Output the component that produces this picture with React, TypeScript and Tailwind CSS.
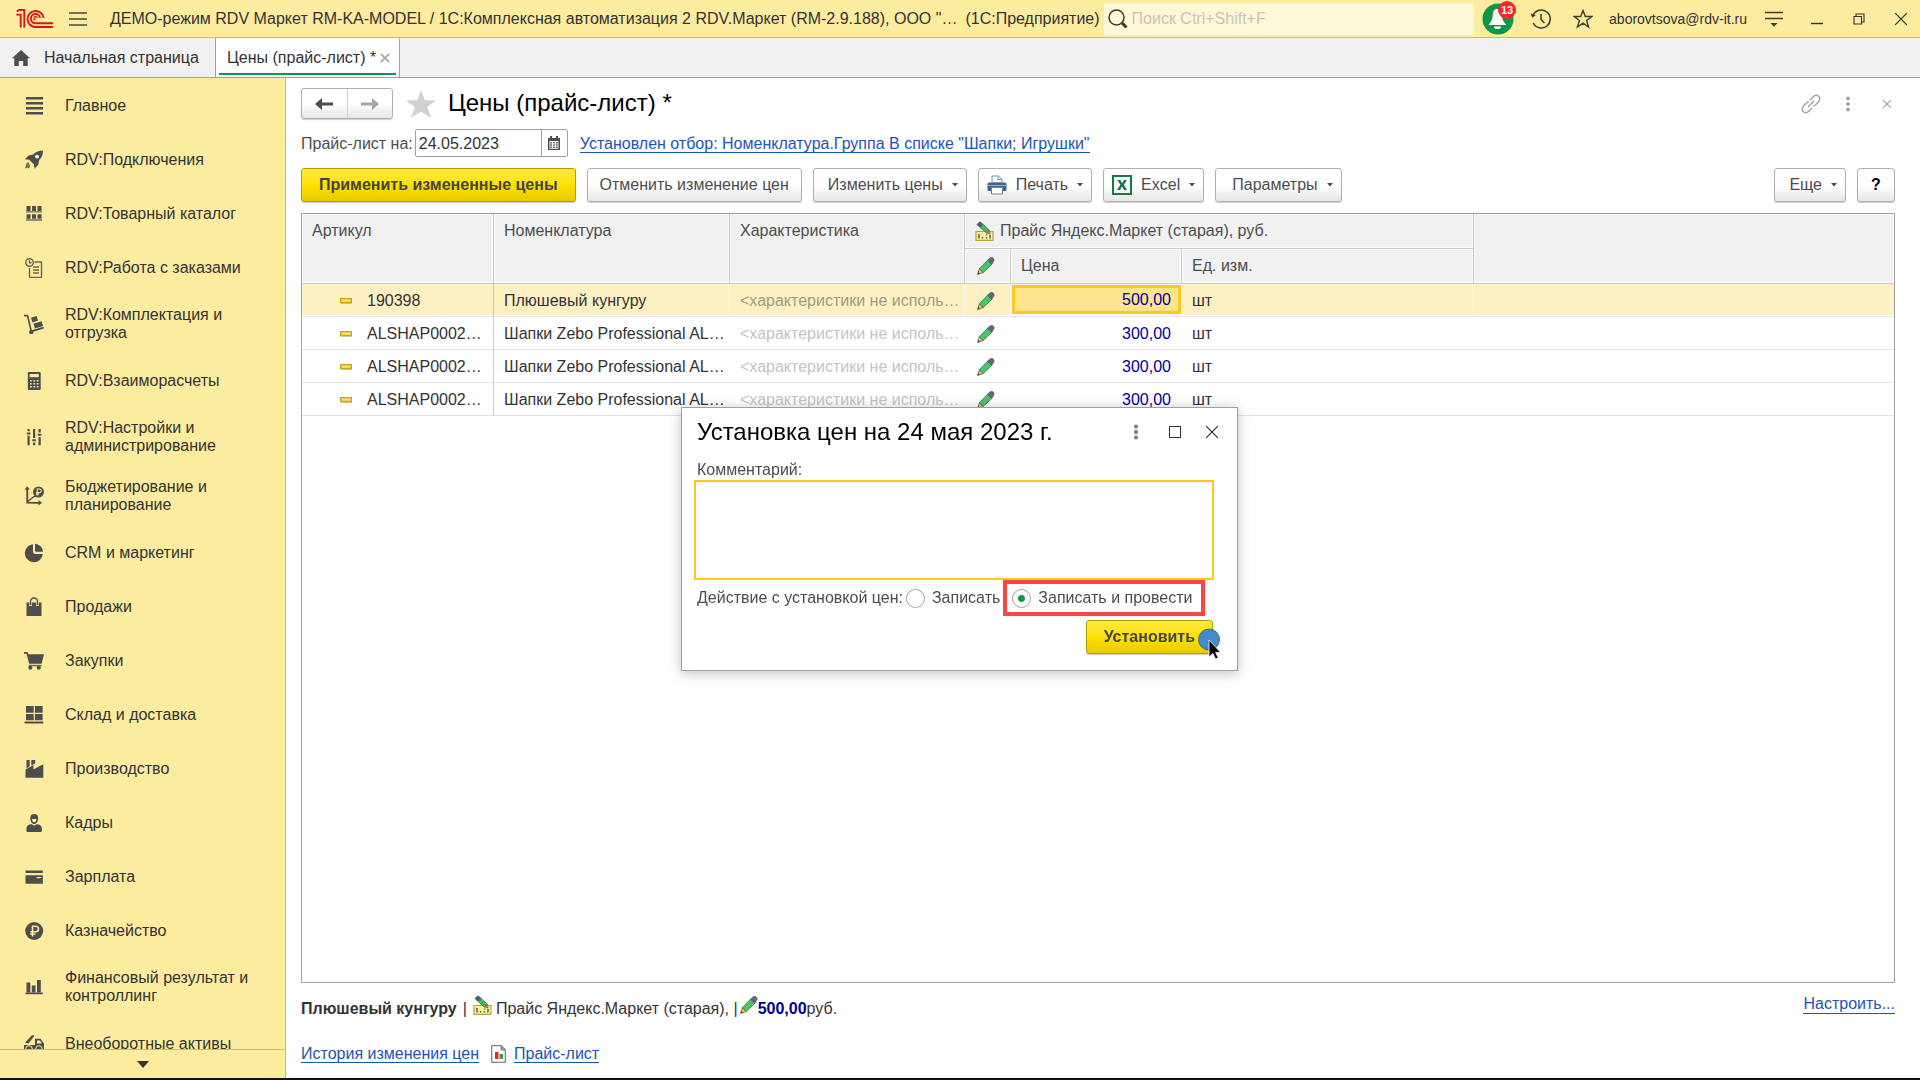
import { useState } from 'react'
import type { ReactNode } from 'react'
import clsx from 'clsx'

const INK = '#4d4d4d'

/* ---------- Section icons (20x20) ---------- */

function Svg({ children, size = 20 }: { children: ReactNode; size?: number }) {
  return (
    <svg width={size} height={size} viewBox={`0 0 ${size} ${size}`} className="shrink-0" fill={INK} aria-hidden="true">
      {children}
    </svg>
  )
}

const ICONS: Record<string, ReactNode> = {
  lines: <path d="M2 1h17v2.4H2zM2 6h17v2.4H2zM2 11h17v2.4H2zM2 16h17v2.4H2z" />,
  rocket: (
    <>
      <path d="M19 0.5c-4 .3-7.600 1.200-9.800 3.900L4.500 5.500 .8 9.200l4.400.6 4.800 4.800.5 4.200 3.800-4.100.9-4.600C18 7.600 19 4.500 19 .5z" />
      <circle cx="13" cy="6.600" r="1.900" fill="#fff" />
      <path d="M4.200 12l-1.700 1.200L1 18.800l2.600-1.400.4 1.400 2-1.800-.3-2.300z" opacity=".8" />
    </>
  ),
  shelves: (
    <>
      <path d="M2.500 2h4v5h-4zM8 2h4v5H8zM13.500 2h4v5h-4zM2.500 10.200h4v4.500h-4zM8 10.200h4v4.500H8zM13.500 10.200h4v4.500h-4z" />
      <path d="M2 7.200h16v1.200H2zM2 15.200h16v1.600H2z" opacity=".8" />
    </>
  ),
  orders: (
    <g fill="none" stroke="#6b6650" strokeWidth="1.400">
      <circle cx="5.500" cy="4.500" r="3.800" />
      <path d="M5.500 2.300v2.400h2" />
      <path d="M10.500 4h7v14.500a1 1 0 0 1-1 1h-10a1 1 0 0 1-1-1V10" />
      <path d="M9 9h6M9 12h6M9 15h6" />
    </g>
  ),
  trolley: (
    <>
      <path d="M0 .8h4.200l3.600 15.400 11.700-3.400.5 1.600-13.300 4L3 2.500H0z" />
      <circle cx="7.300" cy="18" r="2.200" />
      <path d="M7 3.800l5.500-1.800 1.500 4.600-5.500 1.800zM9.500 9.700l8-2.400 1.600 4.600-8.100 2.500z" />
    </>
  ),
  calc: (
    <>
      <path d="M5 1h10.500a1.200 1.200 0 0 1 1.200 1.200v15.600a1.200 1.200 0 0 1-1.200 1.200H5a1.200 1.200 0 0 1-1.200-1.200V2.200A1.200 1.200 0 0 1 5 1z" />
      <path d="M5.600 3h9.200v3.200H5.600zM6 9h1.700v1.400H6zM9.400 9h1.700v1.400H9.400zM12.800 9h1.700v1.400h-1.700zM6 12h1.700v1.400H6zM9.400 12h1.700v1.400H9.400zM12.800 12h1.700v1.400h-1.700zM6 15h1.700v1.400H6zM9.400 15h1.700v1.400H9.400zM12.800 15h1.700v1.400h-1.700z" fill="#fbeca0" />
    </>
  ),
  sliders: (
    <path d="M3.500 2h2.200v2.200H3.500zM2.800 5.500h3.600v2H2.800zM3.500 8.800h2.200v9.400H3.500zM9 2h2.200v9H9zM8.300 12.200h3.600v2H8.300zM9 15.600h2.200v2.600H9zM14.500 2h2.200v3.500h-2.200zM13.800 6.800h3.600v2h-3.600zM14.500 10.200h2.200v8h-2.200z" />
  ),
  budget: (
    <>
      <path d="M2.300 17.500V3.500H.5L3.200.3l2.700 3.200H4.200v12.600h10.300v-1.900l3.600 2.600-3.600 2.600v-1.700z" />
      <path d="M4 15.500l4.800-4.200 2.800-1.400" fill="none" stroke={INK} strokeWidth="1.300" />
      <circle cx="14.500" cy="6" r="5.500" />
      <path d="M13.200 9.600V3h2.300a1.800 1.800 0 0 1 0 3.600h-3.600M11.900 8.200h3.300" fill="none" stroke="#fbeca0" strokeWidth="1.100" />
    </>
  ),
  pie: (
    <>
      <path d="M9 1.200A9 9 0 1 0 18.800 11H11.500A2.500 2.500 0 0 1 9 8.500z" />
      <path d="M11 .8A8.500 8.500 0 0 1 19 8.800H12.200A1.200 1.200 0 0 1 11 7.600z" />
    </>
  ),
  bag: (
    <>
      <path d="M2.500 5.500h15V19h-15z" />
      <path d="M6.500 9V4.500a3.500 3.500 0 0 1 7 0V9" fill="none" stroke="#fbeca0" strokeWidth="2.600" />
      <path d="M6.500 8V4.500a3.500 3.500 0 0 1 7 0V8" fill="none" stroke={INK} strokeWidth="1.400" />
    </>
  ),
  cart: (
    <>
      <path d="M0 1h3.600l.8 2.200H20l-2.400 9.600H5.200L2.500 2.800H0z" />
      <path d="M4.600 13.800h13v1.600h-13z" opacity=".8" />
      <circle cx="6.300" cy="16.800" r="2" />
      <circle cx="14.800" cy="16.800" r="2" />
    </>
  ),
  store: <path d="M2 1h7.700v6.700H2zM10.900 1h7.700v6.700h-7.700zM2 8.900h7.700v6.300H2zM10.900 8.900h7.700v6.300h-7.700zM.5 16.400h18.700v2H.5z" />,
  factory: (
    <path d="M2.500 1h3.200v6.200L2.500 9.400zM7.300 1h3.900v3.600L7.300 6.600zM1.500 18.800v-8.200l8-4.600v4.200l9.800-5v13.600z" />
  ),
  person: (
    <>
      <path d="M6.300 5.200C6.300 2.200 7.800 1 10.200 1s4 1.200 4 4.200c0 3-1.600 5.800-4 5.800s-3.900-2.800-3.900-5.800z" />
      <path d="M8 6h4.400c0 1.900-.8 3.300-2.200 3.300S8 7.900 8 6z" fill="#fbeca0" />
      <path d="M2.500 16c0-3.500 2-4.600 5.300-4.800l2.400 1.600 2.400-1.600c3.300.2 5.300 1.300 5.300 4.800v1.400c0 1-.6 1.600-1.600 1.600H4.100c-1 0-1.600-.6-1.600-1.600z" />
    </>
  ),
  card: (
    <>
      <path d="M1.500 3.500h17.300V6H1.500zM1.500 8.200h17.300v8.500H1.500z" />
      <path d="M12.500 10h4.800v1.200h-4.800z" fill="#fbeca0" />
    </>
  ),
  ruble: (
    <>
      <circle cx="10.200" cy="10" r="9" />
      <path d="M8.500 15.500V5.200h3.200a2.700 2.700 0 0 1 0 5.500H6.300M6.300 13h5.200" fill="none" stroke="#fbeca0" strokeWidth="1.600" />
    </>
  ),
  bars: <path d="M2.500 5.500h3.800v9.800H2.500zM7.800 8.600h3.700v6.700H7.800zM13 3h3.800v12.300H13zM1.500 15.600h17.300v1.600H1.500z" />,
  truck: (
    <>
      <path d="M1 8.500L8 1.200l2.600.4L4.500 9.500zM0 11h11V4.800h5.500l3.500 5V16H0z" />
      <path d="M13 6.400h3l1.800 3H13z" fill="#fbeca0" />
      <circle cx="5" cy="15" r="3.300" stroke="#fbeca0" />
      <circle cx="15" cy="15" r="3.300" stroke="#fbeca0" />
    </>
  ),
}

const SECTIONS = [
  { icon: 'lines',   label: 'Главное' },
  { icon: 'rocket',  label: 'RDV:Подключения' },
  { icon: 'shelves', label: 'RDV:Товарный каталог' },
  { icon: 'orders',  label: 'RDV:Работа с заказами' },
  { icon: 'trolley', label: 'RDV:Комплектация и отгрузка' },
  { icon: 'calc',    label: 'RDV:Взаиморасчеты' },
  { icon: 'sliders', label: 'RDV:Настройки и администрирование' },
  { icon: 'budget',  label: 'Бюджетирование и планирование' },
  { icon: 'pie',     label: 'CRM и маркетинг' },
  { icon: 'bag',     label: 'Продажи' },
  { icon: 'cart',    label: 'Закупки' },
  { icon: 'store',   label: 'Склад и доставка' },
  { icon: 'factory', label: 'Производство' },
  { icon: 'person',  label: 'Кадры' },
  { icon: 'card',    label: 'Зарплата' },
  { icon: 'ruble',   label: 'Казначейство' },
  { icon: 'bars',    label: 'Финансовый результат и контроллинг' },
  { icon: 'truck',   label: 'Внеоборотные активы' },
]

const ROWS = [
  { sku: '190398',      name: 'Плюшевый кунгуру',           price: '500,00', selected: true },
  { sku: 'ALSHAP0002…', name: 'Шапки Zebo Professional AL…', price: '300,00' },
  { sku: 'ALSHAP0002…', name: 'Шапки Zebo Professional AL…', price: '300,00' },
  { sku: 'ALSHAP0002…', name: 'Шапки Zebo Professional AL…', price: '300,00' },
]

/* ---------- Coloured icons ---------- */

function Pencil() {
  return (
    <svg width="18" height="18" viewBox="0 0 18 18" className="shrink-0" aria-hidden="true">
      <path d="M.6 17.400L2.400 11.600 6.200 15.600z" fill="#f3bf5c" stroke="#6d5a3a" strokeWidth=".8" />
      <path d="M.5 17.500l.8-2.600 1.700 1.800z" fill="#3b4652" />
      <path d="M2.400 11.600L10.500 3.200l4.300 4.200-8.600 8.200z" fill="#4bc468" stroke="#3d7a50" strokeWidth=".8" />
      <path d="M10.500 3.200L13 1c1-.9 2.300-.8 3.200.1s1.300 2.300.3 3.300L14.800 7.400z" fill="#5b6b80" stroke="#465263" strokeWidth=".7" />
    </svg>
  )
}

function PriceType() {
  return (
    <svg width="19" height="20" viewBox="0 0 19 20" className="shrink-0" aria-hidden="true">
      <path d="M1 10.500h17v8.800H1z" fill="#f8f0a4" stroke="#b5a53a" strokeWidth="1.200" />
      <path d="M4 13v4.500M7.500 16v1.500M11.500 13.500v1M11.500 16.200v1.200M15 14v3.500" stroke="#5c5630" strokeWidth="1.400" />
      <path d="M2 3.500L5 .8l3.200 2.600L5 6.500z" fill="#4d5b6e" stroke="#3f4a59" strokeWidth=".7" />
      <path d="M5 6.500l3.200-3.100 6.200 6L11.500 12z" fill="#43b864" stroke="#2f7c49" strokeWidth=".8" />
      <path d="M11.500 12l2.900-2.600.8 3.800z" fill="#e58c4e" stroke="#7a4e2c" strokeWidth=".6" />
    </svg>
  )
}

function Dash() {
  return (
    <svg width="12" height="6" viewBox="0 0 12 6" className="shrink-0" aria-hidden="true">
      <rect x=".7" y=".7" width="10.600" height="3.800" fill="#fbe36b" stroke="#d2a412" strokeWidth="1.400" />
      <path d="M1 5.600h11" stroke="#c9bd93" />
    </svg>
  )
}

function Printer() {
  return (
    <svg width="20" height="20" viewBox="0 0 20 20" className="shrink-0" aria-hidden="true">
      <path d="M5 8V1h6.500L15 4.200V8z" fill="#fff" stroke="#7f93a8" />
      <path d="M11 1v3.500h4" fill="none" stroke="#7f93a8" />
      <rect x=".5" y="7.500" width="19" height="8.500" rx="1.500" fill="#41658c" />
      <path d="M.8 10.500h18.400" stroke="#8fb0cf" />
      <path d="M4.500 12.500h11V19h-11z" fill="#fff" stroke="#6c8299" />
    </svg>
  )
}

function ExcelIcon() {
  return (
    <svg width="20" height="20" viewBox="0 0 20 20" className="shrink-0" aria-hidden="true">
      <rect x="1" y="1" width="18" height="18" fill="#fff" stroke="#127a43" strokeWidth="2" />
      <path d="M5.200 5h3.200l1.800 3.200L12 5h3l-3.200 4.800L15.200 15H12l-2-3.400L8 15H4.900l3.500-5.200z" fill="#127a43" />
    </svg>
  )
}

function Arrow() {
  return (
    <svg width="6" height="4" viewBox="0 0 6 4" className="shrink-0" fill="#4d4d4d" aria-hidden="true">
      <path d="M0 0h6L3 3.500z" />
    </svg>
  )
}

function Kebab({ color }: { color: string }) {
  return (
    <svg width="6" height="16" viewBox="0 0 6 16" fill={color} aria-hidden="true">
      <circle cx="3" cy="2.500" r="2" />
      <circle cx="3" cy="8" r="2" />
      <circle cx="3" cy="13.500" r="2" />
    </svg>
  )
}

function Cross({ size, color, width = 1.5 }: { size: number; color: string; width?: number }) {
  return (
    <svg width={size} height={size} viewBox="0 0 12 12" fill="none" stroke={color} strokeWidth={width} aria-hidden="true">
      <path d="M1 1l10 10M11 1L1 11" />
    </svg>
  )
}

/* ---------- Buttons ---------- */

function ToolButton({ children, menu, primary, className }: {
  children: ReactNode
  menu?: boolean
  primary?: boolean
  className?: string
}) {
  return (
    <button
      type="button"
      className={clsx(
        'flex h-[34px] shrink-0 items-center rounded-[3px] border shadow-[0_1px_1px_rgba(0,0,0,0.2)] whitespace-nowrap',
        primary
          ? 'border-[#b3a000] bg-linear-to-b from-[#ffe83d] via-[#ffe000] to-[#e8ca00] font-bold text-[#454545]'
          : 'border-[#b0b0b0] bg-linear-to-b from-white from-50% to-[#e6e6e6] text-[#4d4d4d]',
        menu ? 'gap-[9px] pr-2' : 'justify-center',
        className,
      )}
    >
      {children}
      {menu && <Arrow />}
    </button>
  )
}

/* ---------- Top bar ---------- */

function TopBar() {
  return (
    <header className="flex h-[38px] shrink-0 items-center border-b border-[#cdbd68] bg-[#fbeca0] pr-3 pl-4 text-[#333]">
      <svg width="37" height="20" viewBox="0 0 37 20" fill="none" stroke="#d9141e" strokeWidth="1.900" className="shrink-0" aria-label="1С">
        <path d="M.3 5.600H4.700V18.500M.8 2.600L3 1H8.300V18.500" />
        <path d="M27.500 9A8 8 0 1 0 19.500 18H37" />
        <path d="M24 9A4.600 4.600 0 1 0 19.500 14.200H37" />
        <path d="M21.300 9.300A1.700 1.700 0 1 0 19.500 11" strokeWidth="1.300" />
      </svg>
      <button type="button" aria-label="Меню" className="ml-4 shrink-0">
        <svg width="18" height="16" viewBox="0 0 18 16" stroke="#4d4a38" strokeWidth="1.300" aria-hidden="true">
          <path d="M0 2h18M0 8h18M0 14h18" />
        </svg>
      </button>
      <div className="ml-[23px] flex min-w-0 shrink-0 gap-2 whitespace-nowrap">
        <span>ДЕМО-режим RDV Маркет RM-KA-MODEL / 1С:Комплексная автоматизация 2 RDV.Маркет (RM-2.9.188), ООО "…</span>
        <span>(1С:Предприятие)</span>
      </div>
      <label className="ml-1 flex h-8 min-w-0 flex-1 items-center gap-1 rounded-[2px] bg-[#fef7d8] pl-1">
        <svg width="20" height="20" viewBox="0 0 20 20" fill="none" stroke="#3b3b33" className="shrink-0" aria-hidden="true">
          <circle cx="8.500" cy="8.500" r="7.500" strokeWidth="1.500" />
          <path d="M14 14l4.500 4.500" strokeWidth="3" />
        </svg>
        <input
          type="search"
          aria-label="Поиск"
          placeholder="Поиск Ctrl+Shift+F"
          className="w-full min-w-0 bg-transparent placeholder:text-[#c9c6b8] focus:outline-none"
        />
      </label>
      <div className="ml-2 flex shrink-0 items-center">
        <button type="button" aria-label="Уведомления" className="relative">
          <svg width="32" height="32" viewBox="0 0 32 32" aria-hidden="true">
            <circle cx="16" cy="16" r="15.500" fill="#0f9648" />
            <path d="M15 6c3.500 0 4.800 2.500 5 6.500.2 4 1.500 6.500 4.200 9.500H6.500c2.700-3 4-5.500 4.200-9.500C10.900 8.500 12 6 15 6z" fill="#fff" />
            <path d="M12 23.500h7a3.500 2.600 0 0 1-7 0z" fill="#fff" />
          </svg>
          <span className="absolute -top-0.5 left-4 flex h-[18px] w-[18px] items-center justify-center rounded-full bg-[#fb2428] text-[11px] leading-3 font-bold text-white">
            13
          </span>
        </button>
        <button type="button" aria-label="История" className="ml-4">
          <svg width="21" height="20" viewBox="0 0 21 20" fill="none" stroke="#3f3d30" strokeWidth="1.500" aria-hidden="true">
            <path d="M3 6.500A9 9 0 1 1 3.200 14" />
            <path d="M11 5v5.500l3.500 3.500" />
            <path d="M.5 4.500l1.800 4.200L6 6z" fill="#3f3d30" stroke="none" />
          </svg>
        </button>
        <button type="button" aria-label="Избранное" className="ml-[22px]">
          <svg width="20" height="20" viewBox="0 0 20 20" fill="none" stroke="#3f3d30" strokeWidth="1.400" aria-hidden="true">
            <path d="M10 1.500l2.300 6h6.500l-5.200 4 2 6.500L10 14.200 4.400 18l2-6.500-5.200-4h6.500z" />
          </svg>
        </button>
        <button type="button" className="ml-4 text-[14px]">aborovtsova@rdv-it.ru</button>
        <button type="button" aria-label="Настройки" className="ml-[18px]">
          <svg width="18" height="18" viewBox="0 0 18 18" stroke="#3f3d30" strokeWidth="1.500" aria-hidden="true">
            <path d="M0 2.500h18M0 8.500h18" />
            <path d="M5.500 13h7L9 16.800z" fill="#3f3d30" stroke="none" />
          </svg>
        </button>
        <button type="button" aria-label="Свернуть" className="ml-7">
          <svg width="12" height="12" viewBox="0 0 12 12" stroke="#333" strokeWidth="1.400" aria-hidden="true">
            <path d="M0 10.500h12" />
          </svg>
        </button>
        <button type="button" aria-label="Восстановить" className="ml-[30px]">
          <svg width="12" height="12" viewBox="0 0 12 12" fill="none" stroke="#333" strokeWidth="1.100" aria-hidden="true">
            <path d="M1 3.500h7.500V11H1zM3 3.500V1h8v8H8.500" />
          </svg>
        </button>
        <button type="button" aria-label="Закрыть окно" className="ml-[29px]">
          <Cross size={14} color="#333" width={1.1} />
        </button>
      </div>
    </header>
  )
}

function Tabs() {
  return (
    <nav className="flex h-10 shrink-0 border-b border-[#a0a0a0] bg-[#f1f1f1] text-[#333]">
      <a href="#home" className="flex w-[215px] items-center gap-[14px] pl-3">
        <svg width="18" height="16" viewBox="0 0 18 16" fill={INK} aria-hidden="true">
          <path d="M9 0l9 8.200h-2.300V16h-4.500v-5H6.800v5H2.300V8.200H0z" />
        </svg>
        Начальная страница
      </a>
      <div className="flex w-[185px] flex-col border-x border-[#a0a0a0] bg-white px-[3px] pb-[2px]">
        <div className="flex flex-1 items-center justify-between border-b-2 border-[#0f9648] pt-1 pr-[6px] pl-2">
          <a href="#prices">Цены (прайс-лист) *</a>
          <button type="button" aria-label="Закрыть вкладку">
            <Cross size={10} color="#a6a6a6" width={2} />
          </button>
        </div>
      </div>
    </nav>
  )
}

function Sidebar() {
  return (
    <aside className="flex w-[286px] shrink-0 flex-col border-r border-[#cdbd68] bg-[#fbeca0] text-[#333]">
      <ul className="min-h-0 flex-1 overflow-hidden">
        {SECTIONS.map(s => (
          <li key={s.label}>
            <a href={`#${s.icon}`} className="flex min-h-[54px] items-center gap-[21px] pt-3 pr-8 pb-[11px] pl-6 leading-[18px]">
              <Svg>{ICONS[s.icon]}</Svg>
              {s.label}
            </a>
          </li>
        ))}
      </ul>
      <button type="button" aria-label="Прокрутить вниз" className="flex h-[29px] shrink-0 items-center justify-center border-t border-[#cdbd68]">
        <svg width="12" height="7" viewBox="0 0 12 7" fill="#333" aria-hidden="true">
          <path d="M0 0h12L6 7z" />
        </svg>
      </button>
    </aside>
  )
}

/* ---------- Price list form ---------- */

function FormHeader() {
  return (
    <div className="flex h-[31px] items-center">
      <div className="flex h-[31px] w-[92px] rounded-[3px] border border-[#b0b0b0] bg-linear-to-b from-white from-50% to-[#e6e6e6] shadow-[0_1px_1px_rgba(0,0,0,0.2)]">
        <button type="button" aria-label="Назад" className="flex flex-1 items-center justify-center border-r border-[#d0d0d0]">
          <svg width="18" height="12" viewBox="0 0 18 12" fill="#4d4d4d" aria-hidden="true">
            <path d="M0 6l7-6v4.500h11v3H7V12z" />
          </svg>
        </button>
        <button type="button" aria-label="Вперед" className="flex flex-1 items-center justify-center">
          <svg width="18" height="12" viewBox="0 0 18 12" fill="#a6a6a6" aria-hidden="true">
            <path d="M18 6l-7-6v4.500H0v3h11V12z" />
          </svg>
        </button>
      </div>
      <button type="button" aria-label="В избранное" className="ml-[13px]">
        <svg width="30" height="28" viewBox="0 0 30 28" fill="#cfd0d1" aria-hidden="true">
          <path d="M15 0l3.900 10.200L30 10.400l-8.800 6.600L25 28l-10-6.500L5 28l3.800-11L0 10.400l11.100-.2z" />
        </svg>
      </button>
      <h1 className="ml-3 pb-0.5 text-2xl leading-7 text-black">Цены (прайс-лист) *</h1>
      <div className="ml-auto flex items-center">
        <button type="button" aria-label="Получить ссылку">
          <svg width="20" height="20" viewBox="0 0 20 20" fill="none" stroke="#a6a6a6" strokeWidth="1.500" strokeLinecap="round" aria-hidden="true">
            <path d="M9.500 5.800l3-3.300a3.500 3.500 0 0 1 5.300 4.900L14.500 11q-.8.700-1.700.7" />
            <path d="M10.500 14.200l-3 3.300a3.500 3.500 0 0 1-5.300-4.900L5.500 9q.8-.7 1.700-.7" />
            <path d="M7.300 12.700l5.400-5.400" />
          </svg>
        </button>
        <button type="button" aria-label="Еще действия" className="ml-6">
          <Kebab color="#a6a6a6" />
        </button>
        <button type="button" aria-label="Закрыть" className="mr-[3px] ml-[31px]">
          <Cross size={10} color="#a6a6a6" />
        </button>
      </div>
    </div>
  )
}

function PriceDate() {
  const [date, setDate] = useState('24.05.2023')
  return (
    <div className="mt-[10px] flex h-7 items-center">
      <label htmlFor="price-date" className="pt-0.5 text-[#4d4d4d]">Прайс-лист на:</label>
      <div className="ml-0.5 flex h-7 w-[153px] rounded-[2px] border border-[#a0a0a0] bg-white">
        <input
          id="price-date"
          value={date}
          onChange={e => setDate(e.target.value)}
          className="min-w-0 flex-1 px-[3px] pt-0.5 text-[#333] focus:outline-none"
        />
        <button type="button" aria-label="Выбрать дату" className="flex w-[26px] items-center justify-center border-l border-[#a0a0a0]">
          <svg width="12" height="14" viewBox="0 0 12 14" aria-hidden="true">
            <path d="M0 2h12v12H0zM2 0h2v3H2zM8 0h2v3H8z" fill="#4d4d4d" />
            <path d="M1.500 5h9v7.800h-9z" fill="#fff" />
            <path d="M2.300 6h1.500v1.500H2.300zM5.200 6h1.500v1.500H5.200zM8.100 6h1.500v1.500H8.100zM2.300 8.300h1.500v1.500H2.300zM5.200 8.300h1.500v1.500H5.200zM8.100 8.300h1.500v1.500H8.100zM2.300 10.600h1.500v1.500H2.300zM5.200 10.600h1.500v1.500H5.200zM8.100 10.600h1.500v1.500H8.100z" fill="#4d4d4d" />
          </svg>
        </button>
      </div>
      <a href="#filter" className="mt-0.5 ml-3 border-b border-[#1d55b4] leading-[17px] text-[#1d55b4]">
        Установлен отбор: Номенклатура.Группа В списке "Шапки; Игрушки"
      </a>
    </div>
  )
}

function Toolbar() {
  return (
    <div className="mt-[11px] flex gap-[11px]">
      <ToolButton primary className="px-[17px]">Применить измененные цены</ToolButton>
      <ToolButton className="px-3">Отменить изменение цен</ToolButton>
      <ToolButton menu className="pl-[14px]">Изменить цены</ToolButton>
      <ToolButton menu className="pl-2">
        <Printer />
        Печать
      </ToolButton>
      <ToolButton menu className="pl-2">
        <ExcelIcon />
        Excel
      </ToolButton>
      <ToolButton menu className="pl-4">Параметры</ToolButton>
      <ToolButton menu className="ml-auto pl-[14px]">Еще</ToolButton>
      <ToolButton className="w-[38px] font-bold text-black">?</ToolButton>
    </div>
  )
}

const TH = 'border-r border-b border-[#c9c9c9] bg-[#f1f1f1] px-[10px] text-left font-normal shadow-[inset_0_0_0_1px_#fff]'

function PriceTable() {
  return (
    <div className="mt-[11px] min-h-0 flex-1 border border-[#a0a0a0] bg-white">
      <table className="w-full table-fixed border-separate border-spacing-0 whitespace-nowrap">
        <colgroup>
          <col className="w-[192px]" />
          <col className="w-[236px]" />
          <col className="w-[235px]" />
          <col className="w-[46px]" />
          <col className="w-[171px]" />
          <col className="w-[292px]" />
          <col />
        </colgroup>
        <thead className="text-[#4d4d4d]">
          <tr className="h-[35px]">
            <th rowSpan={2} className={clsx(TH, 'pt-[7px] align-top')}>Артикул</th>
            <th rowSpan={2} className={clsx(TH, 'pt-[7px] align-top')}>Номенклатура</th>
            <th rowSpan={2} className={clsx(TH, 'pt-[7px] align-top')}>Характеристика</th>
            <th colSpan={3} className={TH}>
              <span className="flex items-center gap-[6px]">
                <PriceType />
                Прайс Яндекс.Маркет (старая), руб.
              </span>
            </th>
            <th rowSpan={2} aria-label="Прочее" className="border-b border-[#c9c9c9] bg-[#f1f1f1] shadow-[inset_0_0_0_1px_#fff]" />
          </tr>
          <tr className="h-[35px]">
            <th className={clsx(TH, 'pl-3')} aria-label="Изменено"><Pencil /></th>
            <th className={TH}>Цена</th>
            <th className={TH}>Ед. изм.</th>
          </tr>
        </thead>
        <tbody className="text-[#333]">
          {ROWS.map((r, i) => {
            const td = clsx('border-b border-[#e3e3e3] px-[10px] pt-0.5', r.selected && 'border-r border-r-white/80 bg-[#fdf1c4] shadow-[inset_0_-1px_0_#fff]')
            return (
              <tr key={i} className="h-[33px]">
                <td className={clsx('border-r border-b border-r-[#c9c9c9] border-b-[#e3e3e3] pt-0.5 pl-[38px]', r.selected && 'bg-[#fdf1c4] shadow-[inset_0_-1px_0_#fff]')}>
                  <span className="flex items-center gap-[15px]">
                    <Dash />
                    {r.sku}
                  </span>
                </td>
                <td className={td}>{r.name}</td>
                <td className={clsx(td, r.selected ? 'text-[#a09b8b]' : 'text-[#c4c4c4]')}>{'<характеристики не исполь…'}</td>
                <td className={clsx(td, 'pl-3')}><Pencil /></td>
                <td className={clsx(
                  'border-b border-[#e3e3e3] text-right text-[#000096]',
                  r.selected ? 'p-px pb-[2px]' : 'pt-0.5 pr-[11px]',
                )}>
                  {r.selected
                    ? <div className="h-[29px] border-[3px] border-[#fbc91e] bg-[#ffe48f] pr-[7px] leading-6">{r.price}</div>
                    : r.price}
                </td>
                <td className={td}>шт</td>
                <td className={clsx('border-b border-[#e3e3e3]', r.selected && 'bg-[#fdf1c4] shadow-[inset_0_-1px_0_#fff]')} />
              </tr>
            )
          })}
        </tbody>
      </table>
    </div>
  )
}

function FormFooter() {
  return (
    <footer className="pt-3 pb-3">
      <div className="flex items-start justify-between">
        <p className="flex h-7 items-center text-[#333]">
          <b>Плюшевый кунгуру</b>
          <span className="mx-[6px]">|</span>
          <span className="mb-2"><PriceType /></span>
          <span className="ml-1">Прайс Яндекс.Маркет (старая), |</span>
          <span className="mb-2 ml-0.5"><Pencil /></span>
          <b className="text-[#000096]">500,00</b>
          руб.
        </p>
        <a href="#settings" className="border-b border-[#1d55b4] leading-[18px] text-[#1d55b4]">Настроить...</a>
      </div>
      <div className="mt-[19px] flex h-6 items-center">
        <a href="#history" className="border-b border-[#1d55b4] leading-[17px] text-[#1d55b4]">История изменения цен</a>
        <svg width="15" height="18" viewBox="0 0 15 18" className="ml-3" aria-hidden="true">
          <path d="M.7.700h9.500l4.100 4.100v12.500H.7z" fill="#fff" stroke="#7b8894" strokeWidth="1.300" />
          <path d="M10 .7v4.300h4.300" fill="#8c99a5" stroke="#7b8894" />
          <path d="M4 7v7h3.500V7z" fill="#e02b20" />
          <path d="M8.500 9v5H12V9z" fill="#3f9a2f" />
        </svg>
        <a href="#price-list" className="ml-2 border-b border-[#1d55b4] leading-[17px] text-[#1d55b4]">Прайс-лист</a>
      </div>
    </footer>
  )
}

/* ---------- Dialog ---------- */

function Radio({ label, checked, onChange }: { label: string; checked: boolean; onChange: () => void }) {
  return (
    <label className="flex items-center gap-[7px] whitespace-nowrap">
      <input
        type="radio"
        name="action"
        checked={checked}
        onChange={onChange}
        className="m-0 h-[19px] w-[19px] shrink-0 appearance-none rounded-full border border-[#a0a0a0] bg-white checked:bg-[radial-gradient(circle,#0f9648_3px,white_4px)]"
      />
      {label}
    </label>
  )
}

function PriceDialog() {
  const [post, setPost] = useState(true)
  const [comment, setComment] = useState('')
  return (
    <div className="fixed inset-0 z-10 flex items-center justify-center pr-px pb-0.5">
      <section
        role="dialog"
        aria-label="Установка цен"
        className="w-[557px] border border-[#a0a0a0] bg-white px-3 pt-2 pb-4 text-[#4d4d4d] shadow-[0_2px_12px_rgba(0,0,0,0.25)]"
      >
        <div className="flex h-8 items-center pl-[3px]">
          <h2 className="text-2xl leading-8 text-black">Установка цен на 24 мая 2023 г.</h2>
          <div className="mr-[6px] ml-auto flex items-center">
            <button type="button" aria-label="Еще действия"><Kebab color="#777" /></button>
            <button type="button" aria-label="Развернуть" className="ml-[30px] h-3 w-3 border border-[#333]" />
            <button type="button" aria-label="Закрыть диалог" className="ml-6"><Cross size={14} color="#333" width={1.1} /></button>
          </div>
        </div>
        <label htmlFor="comment" className="mt-3 block pl-[3px] leading-5">Комментарий:</label>
        <textarea
          id="comment"
          value={comment}
          onChange={e => setComment(e.target.value)}
          className="block h-[100px] w-[520px] resize-none border-2 border-[#fbc91e] p-1 focus:outline-none"
        />
        <div role="radiogroup" aria-label="Действие с установкой цен" className="flex h-9 items-center pl-[3px]">
          <span className="mr-[3px] whitespace-nowrap">Действие с установкой цен:</span>
          <Radio label="Записать" checked={!post} onChange={() => setPost(false)} />
          <div className="ml-[3px] flex h-9 items-center border-4 border-[#fb4444] pr-[9px] pl-[5px]">
            <Radio label="Записать и провести" checked={post} onChange={() => setPost(true)} />
          </div>
        </div>
        <div className="mt-1 mr-3 flex justify-end">
          <div className="relative">
            <ToolButton primary className="px-[17px]">Установить</ToolButton>
            <svg width="28" height="34" viewBox="0 0 28 34" className="absolute top-2 -right-3" aria-hidden="true">
              <circle cx="12" cy="11.500" r="10.500" fill="#468ac8" stroke="#2f6da8" />
              <path d="M12 12v17l3.900-3.600L18.500 31l2.700-1.200-2.500-5.400h5z" fill="#000" stroke="#fff" strokeWidth=".8" />
            </svg>
          </div>
        </div>
      </section>
    </div>
  )
}

export default function App() {
  return (
    <div className="flex h-screen flex-col overflow-hidden border-b-2 border-[#111118] bg-white font-['Liberation_Sans',Arial,sans-serif] text-base leading-5">
      <TopBar />
      <Tabs />
      <div className="flex min-h-0 flex-1">
        <Sidebar />
        <main className="flex min-w-0 flex-1 flex-col pt-[10px] pr-[25px] pl-[15px]">
          <FormHeader />
          <PriceDate />
          <Toolbar />
          <PriceTable />
          <FormFooter />
        </main>
      </div>
      <PriceDialog />
    </div>
  )
}
